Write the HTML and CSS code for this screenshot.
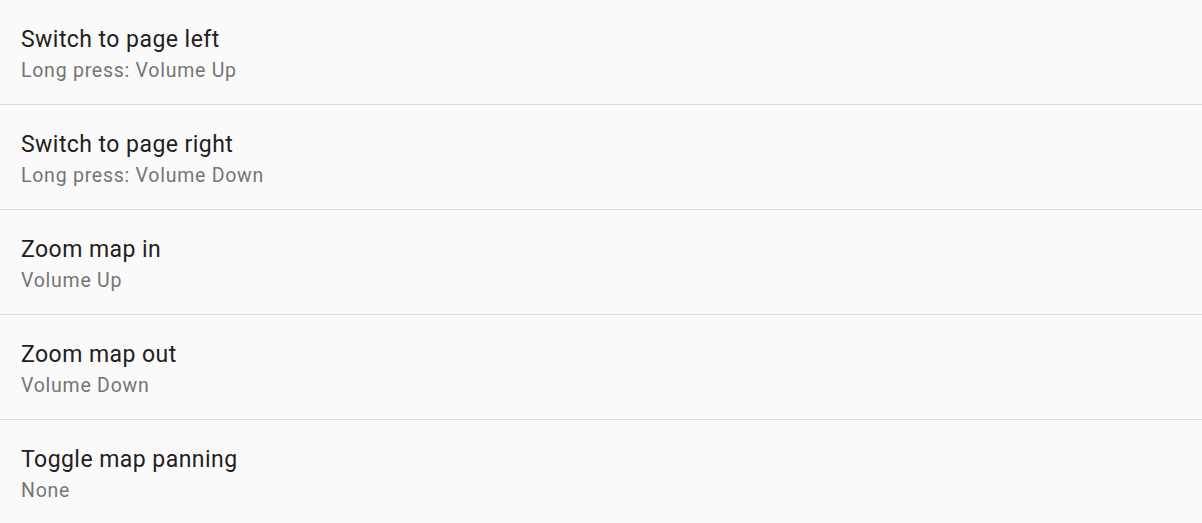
FILE: index.html
```html
<!DOCTYPE html>
<html lang="en">
<head>
    <meta charset="UTF-8">
    <meta name="viewport" content="width=device-width, initial-scale=1.0">
    <title>Hardware buttons</title>
    <link rel="stylesheet" href="styles.css">
</head>
<body>
    <ul class="pref-list">
        <li class="pref">
            <div class="pref-title">Switch to page left</div>
            <div class="pref-summary">Long press: Volume Up</div>
        </li>
        <li class="pref">
            <div class="pref-title">Switch to page right</div>
            <div class="pref-summary">Long press: Volume Down</div>
        </li>
        <li class="pref">
            <div class="pref-title">Zoom map in</div>
            <div class="pref-summary">Volume Up</div>
        </li>
        <li class="pref">
            <div class="pref-title">Zoom map out</div>
            <div class="pref-summary">Volume Down</div>
        </li>
        <li class="pref">
            <div class="pref-title">Toggle map panning</div>
            <div class="pref-summary">None</div>
        </li>
    </ul>
</body>
</html>
```

FILE: styles.css
```css
html, body {
    margin: 0;
    background: #fafafa;
}
body {
    font-family: Roboto, "Noto Sans", sans-serif;
    overflow: hidden;
}
.pref-list {
    list-style: none;
    margin: 0;
    padding: 0;
}
.pref {
    padding: 25px 21px 20px;
    height: 59px;
    border-bottom: 1px solid #dcdcdc;
}
.pref-title {
    font-size: 23px;
    line-height: 30px;
    letter-spacing: 0.45px;
    color: #212121;
}
.pref-summary {
    font-size: 19.5px;
    line-height: 26px;
    letter-spacing: 0.75px;
    margin-top: 3px;
    color: #757575;
}
```
